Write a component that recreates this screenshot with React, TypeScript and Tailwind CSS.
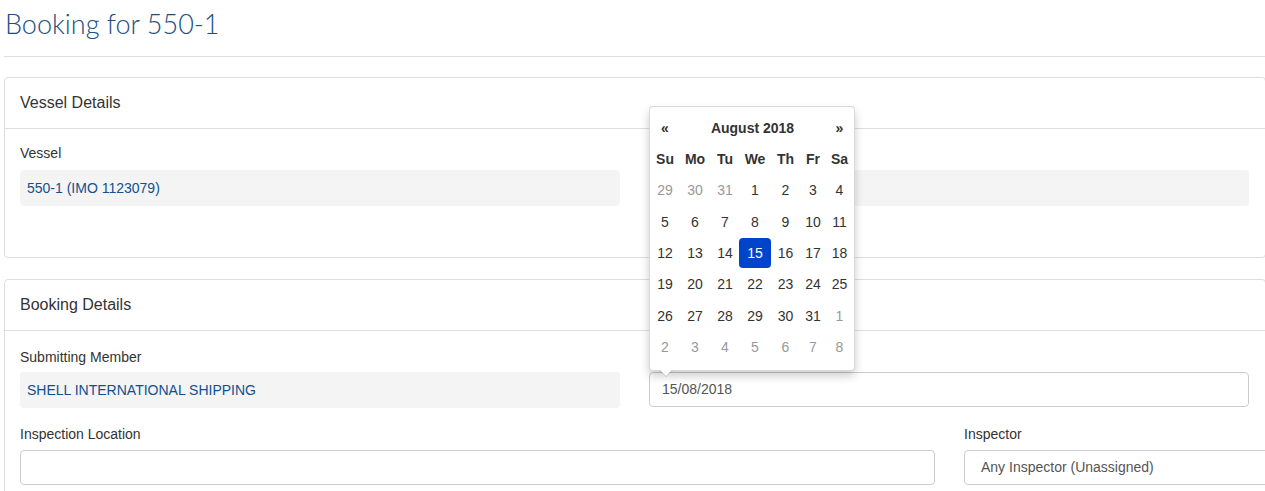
import { ReactNode } from "react";
import { clsx } from "clsx";

type Day = { n: number; muted?: boolean; active?: boolean };

const weekdays = ["Su", "Mo", "Tu", "We", "Th", "Fr", "Sa"];

// August 2018, starting on the Sunday before the 1st
const buildMonth = (): Day[][] => {
  const days: Day[] = [
    { n: 29, muted: true },
    { n: 30, muted: true },
    { n: 31, muted: true },
  ];
  for (let d = 1; d <= 31; d++) days.push({ n: d, active: d === 15 });
  for (let d = 1; d <= 8; d++) days.push({ n: d, muted: true });
  const weeks: Day[][] = [];
  for (let i = 0; i < days.length; i += 7) weeks.push(days.slice(i, i + 7));
  return weeks;
};

const cols = "grid grid-cols-[30px_30px_30px_30px_31px_24px_29px]";

const DatePicker = () => (
  <div className="absolute left-[649px] top-[106px] z-10 w-[206px] rounded-[4px] border border-black/15 bg-white pb-[7px] pt-[6px] text-[14px] text-[#333] shadow-[0_5px_10px_rgba(0,0,0,0.2)]">
    <div className={clsx(cols, "h-[31px] items-center text-center font-bold")}>
      <span>«</span>
      <span className="col-span-5">August 2018</span>
      <span>»</span>
    </div>
    <div className={clsx(cols, "h-[31px] items-center text-center font-bold")}>
      {weekdays.map(w => (
        <span key={w}>{w}</span>
      ))}
    </div>
    {buildMonth().map((week, i) => (
      <div key={i} className={clsx(cols, "h-[31.4px] items-center text-center")}>
        {week.map((d, j) => (
          <span
            key={j}
            className={clsx({
              "text-[#999]": d.muted,
              "-mx-[1px] flex h-[30px] items-center justify-center rounded-[4px] bg-[#0044cc] text-white":
                d.active,
            })}
          >
            {d.n}
          </span>
        ))}
      </div>
    ))}
    {/* little caret pointing at the input */}
    <div className="absolute left-[9px] top-full h-0 w-0 border-x-[7px] border-t-[7px] border-x-transparent border-t-black/15" />
    <div className="absolute left-[10px] top-full h-0 w-0 border-x-[6px] border-t-[6px] border-x-transparent border-t-white" />
  </div>
);

const Panel = ({ title, children }: { title: string; children: ReactNode }) => (
  <div className="w-[1262px] rounded-[4px] border border-[#ddd] bg-white">
    <div className="border-b border-[#ddd] px-[15px] py-[15px] text-[16px] leading-[20px] text-[#333]">
      {title}
    </div>
    <div className="px-[15px]">{children}</div>
  </div>
);

const Label = ({ children, className }: { children: ReactNode; className?: string }) => (
  <div className={clsx("text-[14px] leading-[20px] text-[#333]", className ?? "mb-[7px]")}>
    {children}
  </div>
);

const ReadOnly = ({ children }: { children?: ReactNode }) => (
  <div className="flex h-[36px] items-center rounded-[4px] bg-[#f4f4f4] px-[7px] text-[14px] text-[#11508f]">
    {children}
  </div>
);

const Input = ({ value, className }: { value?: string; className?: string }) => (
  <div
    className={clsx(
      "flex h-[35px] items-center rounded-[4px] border border-[#ccc] bg-white px-[12px] text-[14px] text-[#555]",
      className
    )}
  >
    {value}
  </div>
);

export default function App() {
  return (
    <div className="relative h-[491px] w-[1265px] overflow-hidden bg-white font-['Liberation_Sans',Arial,sans-serif]">
      <div className="pl-[4px]">
        <h1 className="pl-[1px] pt-[6px] font-['Lato',sans-serif] text-[27px] font-light leading-[36px] text-[#1c4f80]">
          Booking for 550-1
        </h1>
        <hr className="mt-[14px] w-[1262px] border-t border-[#ddd]" />

        <div className="mt-[20px]">
          <Panel title="Vessel Details">
            <div className="grid grid-cols-[600px_1fr] gap-x-[29px] pb-[51px] pt-[14px]">
              <div>
                <Label>Vessel</Label>
                <ReadOnly>550-1 (IMO 1123079)</ReadOnly>
              </div>
              <div className="pr-[1px]">
                <Label>&nbsp;</Label>
                <ReadOnly />
              </div>
            </div>
          </Panel>
        </div>

        <div className="mt-[21px]">
          <Panel title="Booking Details">
            <div className="grid grid-cols-[600px_1fr] gap-x-[29px] pt-[16px]">
              <div>
                <Label className="mb-[5px]">Submitting Member</Label>
                <ReadOnly>SHELL INTERNATIONAL SHIPPING</ReadOnly>
              </div>
              <div className="pr-[1px]">
                <Label className="mb-[5px]">&nbsp;</Label>
                <Input value="15/08/2018" />
              </div>
            </div>
            <div className="mt-[16px] grid grid-cols-[915px_1fr] gap-x-[29px] pb-[20px]">
              <div>
                <Label className="mb-[6px]">Inspection Location</Label>
                <Input />
              </div>
              <div>
                <Label className="mb-[6px]">Inspector</Label>
                <Input value="Any Inspector (Unassigned)" className="w-[330px] px-[16px]" />
              </div>
            </div>
          </Panel>
        </div>
      </div>

      <DatePicker />
    </div>
  );
}
